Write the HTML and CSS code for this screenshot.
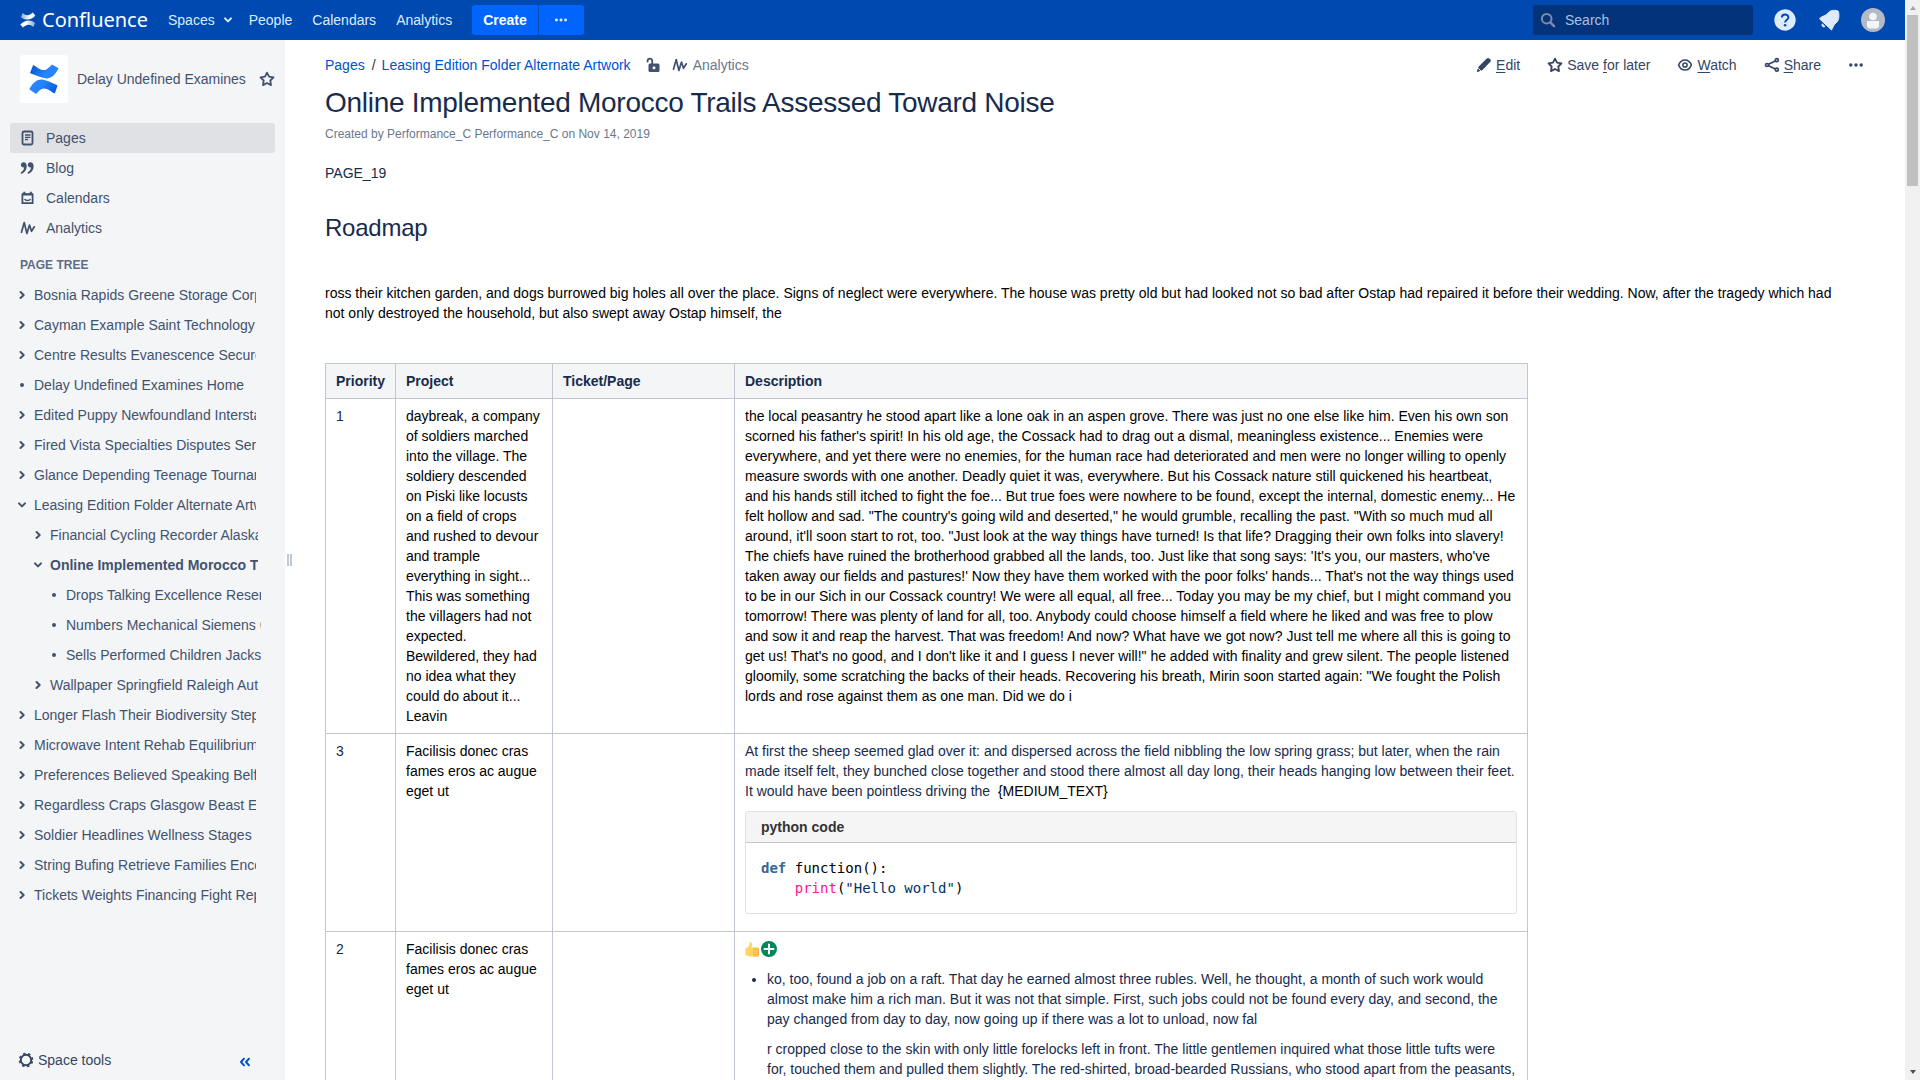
FILE: index.html
```html
<!DOCTYPE html>
<html lang="en">
<head>
<meta charset="utf-8">
<title>Online Implemented Morocco Trails Assessed Toward Noise</title>
<link rel="stylesheet" href="styles.css">
</head>
<body>
<svg class="defs" width="0" height="0" aria-hidden="true">
  <defs>
    <linearGradient id="blue-a" x1="0" y1="0" x2="1" y2="0.4"><stop offset="0" stop-color="#0052cc"/><stop offset="0.7" stop-color="#2684ff"/></linearGradient>
    <linearGradient id="blue-b" x1="1" y1="1" x2="0" y2="0.6"><stop offset="0" stop-color="#0052cc"/><stop offset="0.7" stop-color="#2684ff"/></linearGradient>
    <linearGradient id="white-a" x1="0" y1="0" x2="1" y2="0"><stop offset="0" stop-color="#fff" stop-opacity="0.5"/><stop offset="0.6" stop-color="#fff"/></linearGradient>
    <linearGradient id="white-b" x1="1" y1="0" x2="0" y2="0"><stop offset="0" stop-color="#fff" stop-opacity="0.5"/><stop offset="0.6" stop-color="#fff"/></linearGradient>
    <symbol id="right" viewBox="0 0 8 10"><path d="M2.500 2l3.200 3-3.200 3" fill="none" stroke="currentColor" stroke-width="2" stroke-linecap="round" stroke-linejoin="round"/></symbol>
    <symbol id="down" viewBox="0 0 10 8"><path d="M2 2.400l3 3 3-3" fill="none" stroke="currentColor" stroke-width="2" stroke-linecap="round" stroke-linejoin="round"/></symbol>
    <symbol id="star" viewBox="0 0 16 16"><path d="M8 1.600l2 4 4.500.7-3.200 3.200.7 4.600L8 12l-4 2.100.7-4.600L1.500 6.300 6 5.600z" fill="none" stroke="currentColor" stroke-width="1.800" stroke-linejoin="round"/></symbol>
    <symbol id="pulse" viewBox="0 0 16 16"><path d="M1.500 12.300L4.200 2.500l2.700 11L9.500 5l2 6.300 2.800-4.500" fill="none" stroke="currentColor" stroke-width="1.700" stroke-linecap="round" stroke-linejoin="round"/></symbol>
    <symbol id="dots" viewBox="0 0 16 16"><g fill="currentColor"><circle cx="2.800" cy="8" r="1.700"/><circle cx="8" cy="8" r="1.700"/><circle cx="13.200" cy="8" r="1.700"/></g></symbol>
  </defs>
</svg>

<div class="app">
  <header class="topbar">
    <a class="brand">
      <svg width="16" height="16" viewBox="0 0 32 32">
        <path d="M5.500 2C12 8 18 8 25.500 1l5 6C24 15 12 19 1.500 10z" fill="url(#white-a)"/>
        <path d="M26.500 30C20 24 14 24 6 31l-5.500-6C8 17 20 13 30.500 22z" fill="url(#white-b)"/>
      </svg>
      <svg class="wordmark" width="108" height="28"><text x="0" y="21" textLength="106" lengthAdjust="spacingAndGlyphs">Confluence</text></svg>
    </a>
    <nav class="nav">
      <a class="nav-spaces">Spaces<svg width="10" height="8"><use href="#down"/></svg></a>
      <a>People</a><a>Calendars</a><a>Analytics</a>
    </nav>
    <div class="create"><button class="btn btn-create">Create</button><button class="btn btn-more"><svg width="14" height="14"><use href="#dots"/></svg></button></div>
    <div class="tools">
      <div class="search">
        <svg width="16" height="16" viewBox="0 0 16 16"><circle cx="6.700" cy="6.700" r="4.800" fill="none" stroke="#7e8ba3" stroke-width="2"/><path d="M10.300 10.300l3.800 3.800" stroke="#7e8ba3" stroke-width="2.500" stroke-linecap="round"/></svg>
        <span>Search</span>
      </div>
      <svg width="22" height="22" viewBox="0 0 22 22"><circle cx="11" cy="11" r="10.700" fill="#deebff"/><path d="M7.900 8.600c0-4 6.500-4 6.500-.2 0 2.300-3.300 2.300-3.300 5" fill="none" stroke="#0049b0" stroke-width="2"/><circle cx="11.100" cy="16.200" r="1.300" fill="#0049b0"/></svg>
      <svg width="22" height="22" viewBox="0 0 22 22"><path d="M1.500 9.800C3 7 7 7.500 9.500 4.500 12 1 16 1 19.500 1.700c1 .5 1.200 1 1.200 2.300.5 4 .3 7.500-2.700 10-2.500 2-3 4.500-4.500 7z" fill="#deebff" stroke="#deebff" stroke-linejoin="round"/><path d="M4.200 14.300a2.300 2.300 0 1 0 3.300 3.300z" fill="#deebff"/></svg>
      <svg width="24" height="24" viewBox="0 0 24 24"><circle cx="12" cy="12" r="12" fill="#b3bac5"/><circle cx="12" cy="8.500" r="3.800" fill="#f4f5f7"/><path d="M6 13h12v4.500q0 3-3 3H9q-3 0-3-3z" fill="#f4f5f7"/></svg>
    </div>
  </header>

  <div class="body">
    <aside class="sidebar">
      <div class="space">
        <span class="space-logo"><svg width="30" height="30" viewBox="0 0 32 32">
          <path d="M4.500 1C10 4 14 8.500 19 5.500 22 3.500 23 2 24.500.500L31.500 4.500C27 14 21 17 14 14.500 9 13 5 11 1 9.500z" fill="url(#blue-a)"/>
          <path d="M27.500 31.500C22 28.500 18 24 13 27 10 29 9 30.500 7.500 32L.300 27C5 18 11 15 18 17.500 23 19 26 20.500 30.500 23z" fill="url(#blue-b)"/>
        </svg></span>
        <span class="space-name">Delay Undefined Examines</span>
        <svg width="16" height="16"><use href="#star"/></svg>
      </div>
      <nav class="links">
        <a class="link link-active"><svg width="16" height="16" viewBox="0 0 16 16"><rect x="2.500" y="1.500" width="10" height="13" rx="1.500" fill="none" stroke="currentColor" stroke-width="1.800"/><path d="M5 5h5.500M5 7.300h5.500M5 9.500h3" stroke="currentColor" stroke-width="1.300"/></svg>Pages</a>
        <a class="link"><svg width="16" height="16" viewBox="0 0 16 16" fill="currentColor"><path id="quote" d="M3.700 2.200C1.800 2.200.900 3.500.900 4.900c0 1.600 1.200 2.500 2.600 2.500.3 0 .5 0 .6-.1-.1 2.200-1.200 3.900-3.100 5-.7.5-.2 1.700.7 1.400 3.300-1.200 5-4.100 5-7.400 0-2.500-1.100-4.100-3-4.100z"/><use href="#quote" x="6.900"/></svg>Blog</a>
        <a class="link"><svg width="16" height="16" viewBox="0 0 16 16"><path d="M2.400 4.200h10.200v9H2.400z" fill="none" stroke="currentColor" stroke-width="1.800" stroke-linejoin="round"/><path d="M2 4.500h11M4.300 1.800v2M10.800 1.800v2" stroke="currentColor" stroke-width="2"/><path d="M4.500 9c1 2 5 2 6 0" fill="none" stroke="currentColor" stroke-width="1.400"/></svg>Calendars</a>
        <a class="link"><svg width="16" height="16"><use href="#pulse"/></svg>Analytics</a>
      </nav>
      <h5 class="tree-title">PAGE TREE</h5>
      <ul class="tree">
        <li class="l1"><svg class="chev" width="8" height="10"><use href="#right"/></svg><span>Bosnia Rapids Greene Storage Corp</span></li>
        <li class="l1"><svg class="chev" width="8" height="10"><use href="#right"/></svg><span>Cayman Example Saint Technology</span></li>
        <li class="l1"><svg class="chev" width="8" height="10"><use href="#right"/></svg><span>Centre Results Evanescence Secure</span></li>
        <li class="l1"><i class="dot"></i><span>Delay Undefined Examines Home</span></li>
        <li class="l1"><svg class="chev" width="8" height="10"><use href="#right"/></svg><span>Edited Puppy Newfoundland Interstate</span></li>
        <li class="l1"><svg class="chev" width="8" height="10"><use href="#right"/></svg><span>Fired Vista Specialties Disputes Server</span></li>
        <li class="l1"><svg class="chev" width="8" height="10"><use href="#right"/></svg><span>Glance Depending Teenage Tournament</span></li>
        <li class="l1"><svg class="chev" width="10" height="8"><use href="#down"/></svg><span>Leasing Edition Folder Alternate Artwork</span></li>
        <li class="l2"><svg class="chev" width="8" height="10"><use href="#right"/></svg><span>Financial Cycling Recorder Alaska</span></li>
        <li class="l2 current"><svg class="chev" width="10" height="8"><use href="#down"/></svg><span>Online Implemented Morocco Trails</span></li>
        <li class="l3"><i class="dot"></i><span>Drops Talking Excellence Reserve</span></li>
        <li class="l3"><i class="dot"></i><span>Numbers Mechanical Siemens Cart</span></li>
        <li class="l3"><i class="dot"></i><span>Sells Performed Children Jackson</span></li>
        <li class="l2"><svg class="chev" width="8" height="10"><use href="#right"/></svg><span>Wallpaper Springfield Raleigh Auto</span></li>
        <li class="l1"><svg class="chev" width="8" height="10"><use href="#right"/></svg><span>Longer Flash Their Biodiversity Steps</span></li>
        <li class="l1"><svg class="chev" width="8" height="10"><use href="#right"/></svg><span>Microwave Intent Rehab Equilibrium</span></li>
        <li class="l1"><svg class="chev" width="8" height="10"><use href="#right"/></svg><span>Preferences Believed Speaking Belfast</span></li>
        <li class="l1"><svg class="chev" width="8" height="10"><use href="#right"/></svg><span>Regardless Craps Glasgow Beast Ever</span></li>
        <li class="l1"><svg class="chev" width="8" height="10"><use href="#right"/></svg><span>Soldier Headlines Wellness Stages</span></li>
        <li class="l1"><svg class="chev" width="8" height="10"><use href="#right"/></svg><span>String Bufing Retrieve Families Encore</span></li>
        <li class="l1"><svg class="chev" width="8" height="10"><use href="#right"/></svg><span>Tickets Weights Financing Fight Report</span></li>
      </ul>
      <div class="side-foot">
        <svg width="16" height="16" viewBox="0 0 16 16"><circle cx="8" cy="8" r="5.200" fill="none" stroke="currentColor" stroke-width="1.900"/><circle cx="8" cy="8" r="6.500" fill="none" stroke="currentColor" stroke-width="1.600" stroke-dasharray="2.500 2.605" stroke-dashoffset="3.800"/></svg>
        <span>Space tools</span>
        <svg class="collapse" width="12" height="10" viewBox="0 0 12 10"><path d="M5 1.700L2 5l3 3.300M10 1.700L7 5l3 3.300" fill="none" stroke="currentColor" stroke-width="2" stroke-linecap="round" stroke-linejoin="round"/></svg>
      </div>
    </aside>
    <div class="grip"><i></i><i></i></div>

    <main class="content">
      <div class="pagebar">
        <div class="crumbs">
          <a>Pages</a><span class="slash">/</span><a>Leasing Edition Folder Alternate Artwork</a>
          <svg class="lock" width="14" height="16" viewBox="0 0 14 16"><rect x="2.500" y="6.500" width="11" height="8.500" rx="1.500" fill="currentColor"/><path d="M1.500 4.500C1.500.8 6.200.8 6.200 4v3" fill="none" stroke="currentColor" stroke-width="1.800" stroke-linecap="round"/><circle cx="8" cy="10.700" r="1.500" fill="#fff"/></svg>
          <svg class="crumb-pulse" width="16" height="16"><use href="#pulse"/></svg><span class="muted">Analytics</span>
        </div>
        <div class="actions">
          <a><svg width="16" height="16" viewBox="0 0 16 16"><path d="M10 2.200l1.200-1q1-.7 2 .2l1.200 1.200q.9 1 .2 2l-8.400 8.600L1.500 15q-.7 0-.6-.7l1.600-4.600z" fill="currentColor"/><path d="M2.200 11.300l2.600 2.500" stroke="#fff" stroke-width="1"/></svg><span><u>E</u>dit</span></a>
          <a><svg width="16" height="16"><use href="#star"/></svg><span>Save <u>f</u>or later</span></a>
          <a><svg width="16" height="16" viewBox="0 0 16 16"><path d="M1.600 8C3 4.500 5.300 3 8 3s5 1.500 6.400 5C13 11.500 10.700 13 8 13s-5-1.500-6.400-5z" fill="none" stroke="currentColor" stroke-width="1.600" stroke-linejoin="round"/><circle cx="8" cy="8" r="2.100" fill="none" stroke="currentColor" stroke-width="1.500"/></svg><span><u>W</u>atch</span></a>
          <a><svg width="16" height="16" viewBox="0 0 16 16" fill="none" stroke="currentColor" stroke-width="1.700"><path d="M11.300 4L4.500 7.300M4.500 8.700l6.800 3.300"/><circle cx="3" cy="8" r="1.500"/><circle cx="12.800" cy="3.200" r="1.500"/><circle cx="12.800" cy="12.700" r="1.500"/></svg><span><u>S</u>hare</span></a>
          <svg width="16" height="16"><use href="#dots"/></svg>
        </div>
      </div>
      <h1>Online Implemented Morocco Trails Assessed Toward Noise</h1>
      <p class="byline">Created by Performance_C Performance_C on Nov 14, 2019</p>
      <p class="tag">PAGE_19</p>
      <h2>Roadmap</h2>
      <p class="intro">ross their kitchen garden, and dogs burrowed big holes all over the place. Signs of neglect were everywhere. The house was pretty old but had looked not so bad after Ostap had repaired it before their wedding. Now, after the tragedy which had not only destroyed the household, but also swept away Ostap himself, the</p>
      <table class="roadmap">
        <colgroup><col class="c1"><col class="c2"><col class="c3"><col class="c4"></colgroup>
        <thead><tr><th>Priority</th><th>Project</th><th>Ticket/Page</th><th>Description</th></tr></thead>
        <tbody>
          <tr>
            <td>1</td>
            <td class="ink">daybreak, a company of soldiers marched into the village. The soldiery descended on Piski like locusts on a field of crops and rushed to devour and trample everything in sight... This was something the villagers had not expected. Bewildered, they had no idea what they could do about it... Leavin</td>
            <td></td>
            <td class="ink">the local peasantry he stood apart like a lone oak in an aspen grove. There was just no one else like him. Even his own son scorned his father's spirit! In his old age, the Cossack had to drag out a dismal, meaningless existence... Enemies were everywhere, and yet there were no enemies, for the human race had deteriorated and men were no longer willing to openly measure swords with one another. Deadly quiet it was, everywhere. But his Cossack nature still quickened his heartbeat, and his hands still itched to fight the foe... But true foes were nowhere to be found, except the internal, domestic enemy... He felt hollow and sad. "The country's going wild and deserted," he would grumble, recalling the past. "With so much mud all around, it'll soon start to rot, too. "Just look at the way things have turned! Is that life? Dragging their own folks into slavery! The chiefs have ruined the brotherhood grabbed all the lands, too. Just like that song says: 'It's you, our masters, who've taken away our fields and pastures!' Now they have them worked with the poor folks' hands... That's not the way things used to be in our Sich in our Cossack country! We were all equal, all free... Today you may be my chief, but I might command you tomorrow! There was plenty of land for all, too. Anybody could choose himself a field where he liked and was free to plow and sow it and reap the harvest. That was freedom! And now? What have we got now? Just tell me where all this is going to get us! That's no good, and I don't like it and I guess I never will!" he added with finality and grew silent. The people listened gloomily, some scratching the backs of their heads. Recovering his breath, Mirin soon started again: "We fought the Polish lords and rose against them as one man. Did we do i</td>
          </tr>
          <tr>
            <td>3</td>
            <td class="ink">Facilisis donec cras fames eros ac augue eget ut</td>
            <td></td>
            <td>
              <p>At first the sheep seemed glad over it: and dispersed across the field nibbling the low spring grass; but later, when the rain made itself felt, they bunched close together and stood there almost all day long, their heads hanging low between their feet. It would have been pointless driving the&nbsp; <span class="ink">{MEDIUM_TEXT}</span></p>
              <div class="code">
                <div class="code-title">python code</div>
<pre><b>def</b> function():
    <i>print</i>(<q>"Hello world"</q>)</pre>
              </div>
            </td>
          </tr>
          <tr>
            <td>2</td>
            <td class="ink">Facilisis donec cras fames eros ac augue eget ut</td>
            <td></td>
            <td>
              <div class="emoji">
                <svg width="16" height="16" viewBox="0 0 16 16"><path d="M1.500 6.800q2.500-.8 3-3.300L4.800 1q2.200-.5 2.200 2.200 0 2-.4 3.300h6.200q1 0 1 1.200v6.600q0 1.300-1.300 1.300H5.500q-2 0-2.500-1H1.500Q.5 14.600.5 13V8.200q0-1 1-1.400z" fill="#ffd45e"/><path d="M8.300 6.700h4.500q1.200 0 1.200 1.400v6q0 1.500-1.400 1.500H9.200q-1 0-.9-1.300z" fill="#f2a740"/><path d="M8.500 7.900h5M8.500 10h5M8.500 12.100h5M8.800 14.200h4.200" stroke="#ffd45e" stroke-width="1.300"/></svg><svg width="16" height="16" viewBox="0 0 16 16"><circle cx="8" cy="8" r="8" fill="#00875a"/><path d="M8 3.500v9M3.500 8h9" stroke="#fff" stroke-width="2" stroke-linecap="round"/></svg>
              </div>
              <ul class="bullets"><li><p>ko, too, found a job on a raft. That day he earned almost three rubles. Well, he thought, a month of such work would almost make him a rich man. But it was not that simple. First, such jobs could not be found every day, and second, the pay changed from day to day, now going up if there was a lot to unload, now fal</p><p>r cropped close to the skin with only little forelocks left in front. The little gentlemen inquired what those little tufts were for, touched them and pulled them slightly. The red-shirted, broad-bearded Russians, who stood apart from the peasants,</p></li></ul>
            </td>
          </tr>
        </tbody>
      </table>
    </main>
  </div>
</div>
<div class="scrollbar"><i class="arrow-up"></i><div class="thumb"></div><i class="arrow-down"></i></div>
</body>
</html>
```

FILE: styles.css
```css
* { box-sizing: border-box; }
body {
  margin: 0;
  display: flex;
  height: 1080px;
  overflow: hidden;
  background: #fff;
  color: #172b4d;
  font: 14px/20px "Liberation Sans", Arial, sans-serif;
}
h1, h2, h5, p, ul, pre { margin: 0; padding: 0; }
svg { display: block; flex: none; }
.defs { position: absolute; }
.app { width: 1905px; height: 1080px; display: flex; flex-direction: column; flex: none; }

/* Top bar */
.topbar {
  flex: none;
  height: 40px;
  display: flex;
  align-items: center;
  padding: 0 20px;
  background: #0049b0;
  color: #deebff;
}
.brand { display: flex; align-items: center; gap: 6px; width: 148px; }
.brand > svg:first-child { margin-top: -1px; }
.wordmark text { font: 20px "Noto Sans", sans-serif; fill: #fff; }
.nav { display: flex; gap: 20px; width: 304px; white-space: nowrap; }
.nav-spaces { display: flex; align-items: center; gap: 8px; margin-right: -4px; }
.create { display: flex; gap: 1px; }
.btn {
  height: 30px;
  border: 0;
  padding: 0;
  background: #0065ff;
  color: #fff;
  font: bold 14px/20px "Liberation Sans", Arial, sans-serif;
  display: flex;
  align-items: center;
  justify-content: center;
}
.btn-create { width: 66px; border-radius: 3px 0 0 3px; }
.btn-more { width: 45px; padding-right: 1px; border-radius: 0 3px 3px 0; color: #deebff; }
.tools { margin-left: auto; display: flex; align-items: center; gap: 21px; }
.tools > svg:nth-child(3) { margin-left: 1px; }
.search {
  width: 220px;
  height: 30px;
  border-radius: 3px;
  background: #03337a;
  display: flex;
  align-items: center;
  gap: 9px;
  padding-left: 7px;
  color: #abc0e2;
}

/* Sidebar */
.body { flex: 1; display: flex; min-height: 0; }
.sidebar {
  width: 285px;
  flex: none;
  display: flex;
  flex-direction: column;
  background: #f4f5f7;
  color: #42526e;
}
.space { display: flex; align-items: center; padding: 15px 10px 0 20px; }
.space-logo {
  width: 48px;
  height: 48px;
  border-radius: 3px;
  background: #fff;
  display: flex;
  align-items: center;
  justify-content: center;
}
.space-name { width: 173px; padding-left: 9px; margin-right: 10px; flex: 1; white-space: nowrap; }
.links { padding: 20px 10px 0; }
.link { height: 30px; display: flex; align-items: center; gap: 10px; padding-left: 10px; border-radius: 3px; }
.link-active { background: #dfe1e5; }
.tree-title { margin: 12px 0 5px 20px; font-size: 12px; line-height: 20px; color: #5e6c84; }
.tree { list-style: none; }
.tree li { height: 30px; display: flex; align-items: center; white-space: nowrap; }
.tree li span { overflow: hidden; line-height: 20px; }
.chev { margin: 0 8px; }
.chev[width="10"] { margin: 0 7px; }
.dot { flex: none; width: 4px; height: 4px; border-radius: 50%; background: currentColor; margin: 0 10px; }
.l1 { padding-left: 10px; width: 256px; }
.l2 { padding-left: 26px; width: 258px; }
.l3 { padding-left: 42px; width: 261px; }
.current { font-weight: bold; }
.side-foot { margin-top: auto; height: 40px; display: flex; align-items: center; gap: 4px; padding: 0 34px 0 18px; color: #344563; }
.collapse { margin: 4px 0 0 auto; color: #0052cc; }
.grip { width: 10px; flex: none; align-self: flex-start; display: flex; gap: 1px; padding: 514px 0 0 2px; }
.grip i { width: 2px; height: 12px; background: #c1c7d0; }

/* Page content */
.content { flex: 1; min-width: 0; padding: 15px 40px 0 30px; }
.pagebar { display: flex; justify-content: space-between; height: 20px; }
.crumbs { display: flex; align-items: center; color: #42526e; }
.crumbs a { color: #0052cc; }
.slash { padding: 0 6px 0 7px; color: #333; }
.lock { margin: 0 12px 0 15px; }
.crumb-pulse { margin-right: 5px; }
.muted { color: #6b778c; }
.actions { display: flex; align-items: center; gap: 27px; padding-right: 1px; color: #344563; }
.actions a { display: flex; align-items: center; gap: 4px; }
.actions u { text-underline-offset: 2px; }
h1 { margin-top: 12px; font-size: 28px; line-height: 32px; font-weight: 400; letter-spacing: -0.01em; }
.byline { margin-top: 5px; font-size: 12px; color: #6b778c; }
.tag { margin-top: 19px; }
h2 { margin-top: 30px; font-size: 24px; line-height: 30px; font-weight: 400; letter-spacing: -0.01em; }
.intro { margin-top: 40px; padding-right: 20px; color: #000; }
.ink { color: #000; }
.roadmap { margin-top: 40px; width: 1202px; table-layout: fixed; border-collapse: collapse; }
.c1 { width: 70px; }
.c2 { width: 157px; }
.c3 { width: 182px; }
.c4 { width: 793px; }
.roadmap th, .roadmap td { border: 1px solid #c1c7d0; padding: 7px 10px; text-align: left; vertical-align: top; }
.roadmap th { background: #f4f5f7; }
.code { margin: 10px 0; border: 1px solid #e0e1e5; border-radius: 3px; overflow: hidden; background: #fff; }
.code-title { height: 31px; padding: 5px 15px; border-bottom: 1px solid #c7c7c7; background: #f5f5f5; color: #333; font-weight: bold; }
pre { padding: 15px; font: 14px/20px "DejaVu Sans Mono", monospace; color: #000; }
pre b { color: #369; }
pre i { font-style: normal; color: #ff1493; }
pre q { quotes: none; color: #003366; }
.emoji { display: flex; align-items: center; height: 20px; }
.bullets { margin-top: 10px; padding-left: 22px; }
.bullets p + p { margin-top: 10px; }

/* Scrollbar */
.scrollbar { width: 15px; flex: none; display: flex; flex-direction: column; align-items: center; background: #f1f1f1; }
.thumb { width: 11px; height: 171px; margin-top: 5px; background: #c1c1c1; }
.arrow-up { margin-top: 6px; border: 3.5px solid transparent; border-top: 0; border-bottom: 4px solid #a3a3a3; }
.arrow-down { margin: auto 0 6px; border: 3.5px solid transparent; border-bottom: 0; border-top: 4px solid #505050; }
```
